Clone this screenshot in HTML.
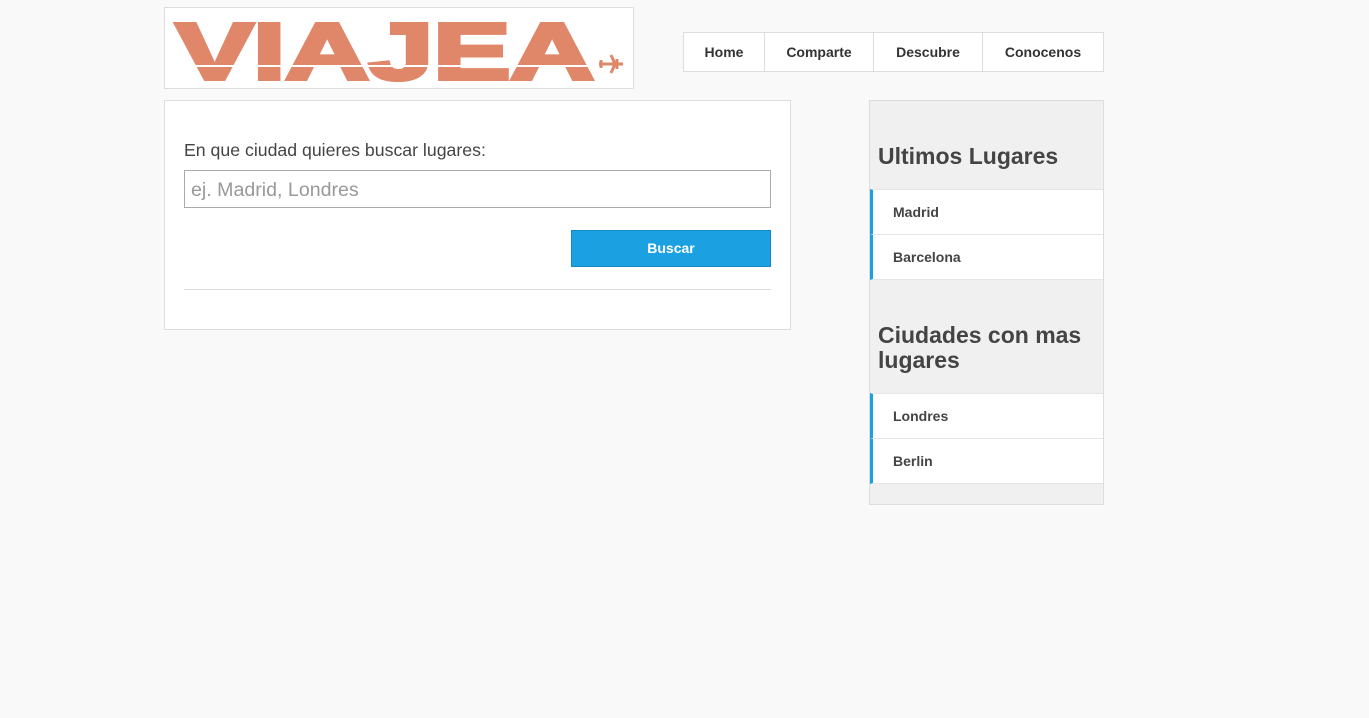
<!DOCTYPE html>
<html><head><style>
body{margin:0;background:#f9f9f9;font-family:"Liberation Sans",Arial,sans-serif;width:1369px;height:718px;position:relative;overflow:hidden}
.abs{position:absolute}
.logo{left:164px;top:7px;width:468px;height:80px;background:#fff;border:1px solid #ddd}
.nav{left:683px;top:32px;height:38px;border:1px solid #ddd;background:#fff;display:flex}
.nav div{font-size:14px;font-weight:bold;color:#333;line-height:38px;text-align:center;border-right:1px solid #ddd}
.nav div:last-child{border-right:none}
.main{left:164px;top:100px;width:625px;height:228px;background:#fff;border:1px solid #ddd}
.side{left:869px;top:100px;width:233px;height:403px;background:#f0f0f0;border:1px solid #ddd}
.side h2{margin:0;position:absolute;left:8px;font-size:23px;font-weight:bold;color:#444;line-height:25px}
.item{position:absolute;left:0;width:230px;height:44px;background:#fff;border-left:3px solid #1ba1e2;border-bottom:1px solid #e5e5e5;font-size:14px;font-weight:bold;color:#444;line-height:44px;text-indent:20px}
</style></head><body>
<div class="abs logo">
<svg width="468" height="80" viewBox="0 0 468 80">
<text x="11" y="71" font-family="Liberation Sans" font-weight="bold" font-size="80" fill="#e0876a" stroke="#e0876a" stroke-width="4" textLength="418" lengthAdjust="spacingAndGlyphs">VIAJEA</text>
<rect x="0" y="57" width="440" height="2" fill="#fff"/>
<path d="M434 56 h24 M446 47 l4 9 l-4 9 M452 51 v10 M436 52 v8" stroke="#e0876a" stroke-width="3" fill="none"/>
</svg>
</div>
<div class="abs nav">
<div style="width:80px">Home</div><div style="width:108px">Comparte</div><div style="width:108px">Descubre</div><div style="width:120px">Conocenos</div>
</div>
<div class="abs main">
<div class="abs" style="left:19px;top:39px;font-size:17.7px;color:#444">En que ciudad quieres buscar lugares:</div>
<div class="abs" style="left:19px;top:69px;width:585px;height:36px;border:1px solid #aaa;background:#fff;font-size:19.6px;color:#999;line-height:38px;text-indent:6px">ej. Madrid, Londres</div>
<div class="abs" style="left:406px;top:129px;width:198px;height:35px;background:#1ba1e2;border:1px solid #1588c0;color:#fff;font-size:14px;font-weight:bold;text-align:center;line-height:35px">Buscar</div>
<div class="abs" style="left:19px;top:188px;width:587px;height:1px;background:#ddd"></div>
</div>
<div class="abs side">
<h2 style="top:43px">Ultimos Lugares</h2>
<div class="item" style="top:88px;border-top:1px solid #e5e5e5">Madrid</div>
<div class="item" style="top:134px">Barcelona</div>
<h2 style="top:222px">Ciudades con mas<br>lugares</h2>
<div class="item" style="top:292px;border-top:1px solid #e5e5e5">Londres</div>
<div class="item" style="top:338px">Berlin</div>
</div>
</body></html>
